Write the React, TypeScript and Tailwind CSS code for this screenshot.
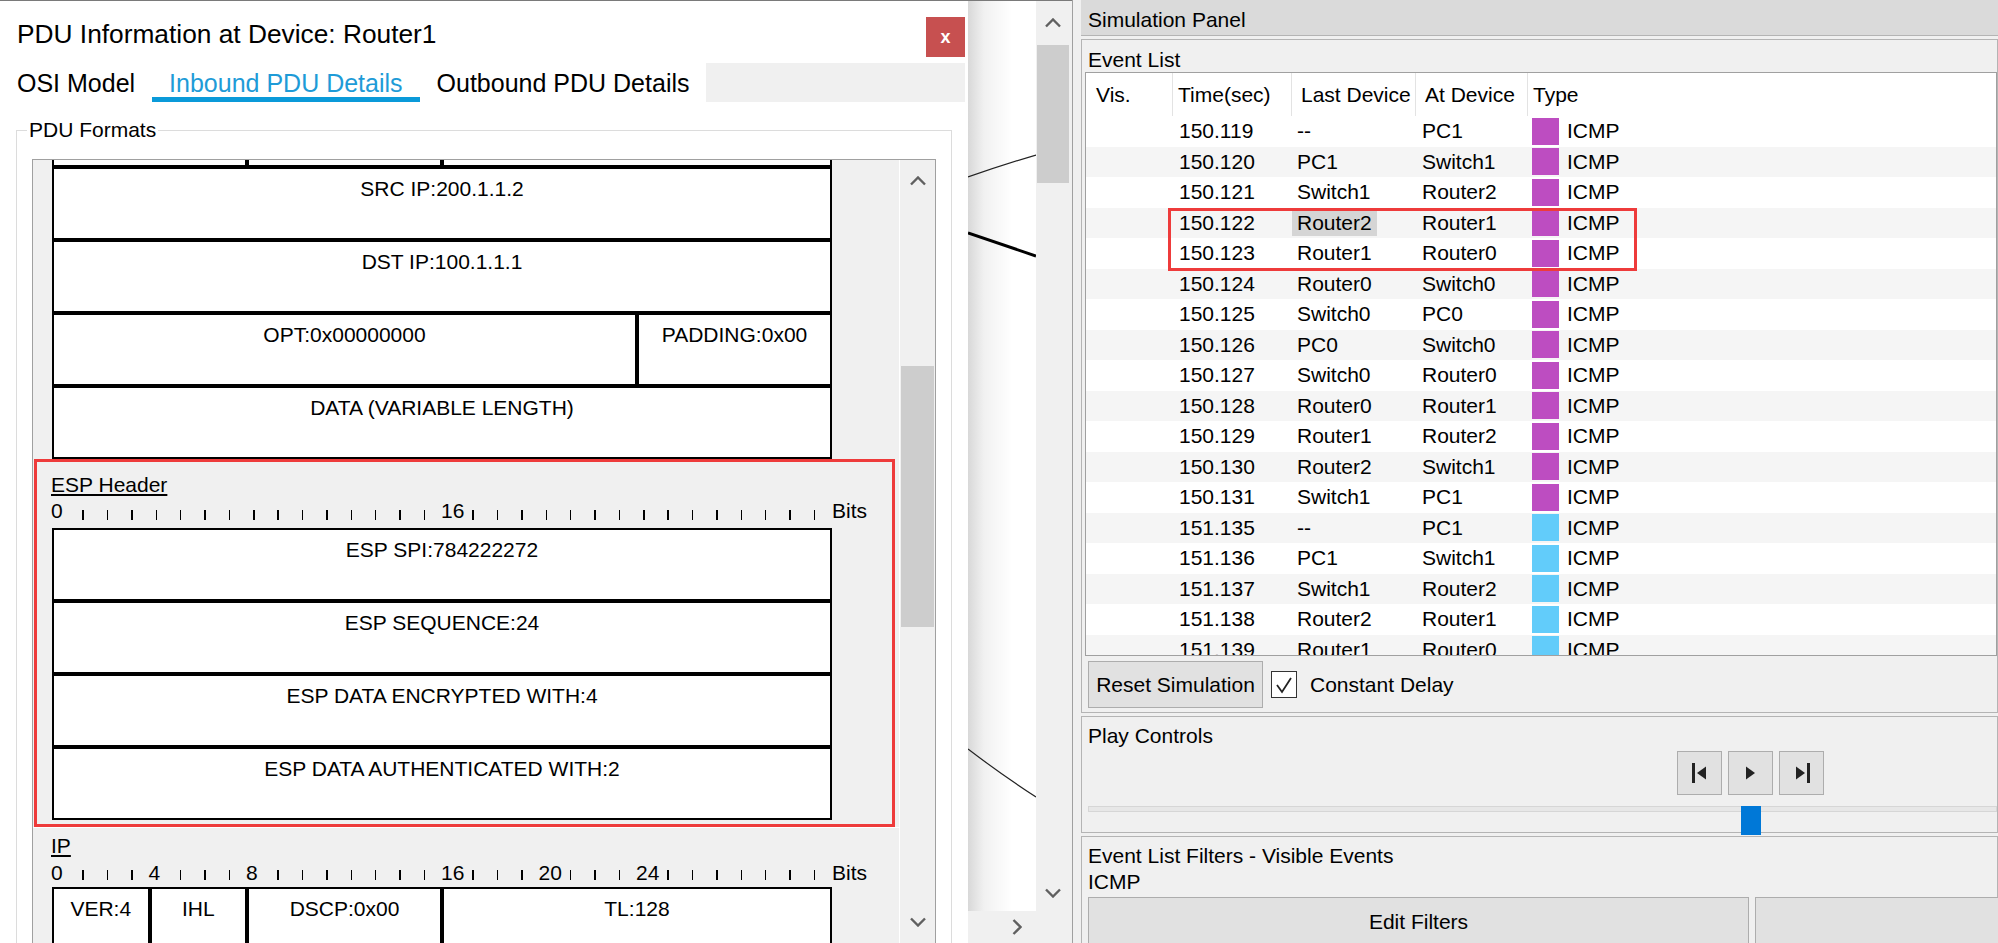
import React from "react";

type Ev = [string, string, string, "p" | "b"];

const EVENTS: Ev[] = [
  ["150.119", "--", "PC1", "p"],
  ["150.120", "PC1", "Switch1", "p"],
  ["150.121", "Switch1", "Router2", "p"],
  ["150.122", "Router2", "Router1", "p"],
  ["150.123", "Router1", "Router0", "p"],
  ["150.124", "Router0", "Switch0", "p"],
  ["150.125", "Switch0", "PC0", "p"],
  ["150.126", "PC0", "Switch0", "p"],
  ["150.127", "Switch0", "Router0", "p"],
  ["150.128", "Router0", "Router1", "p"],
  ["150.129", "Router1", "Router2", "p"],
  ["150.130", "Router2", "Switch1", "p"],
  ["150.131", "Switch1", "PC1", "p"],
  ["151.135", "--", "PC1", "b"],
  ["151.136", "PC1", "Switch1", "b"],
  ["151.137", "Switch1", "Router2", "b"],
  ["151.138", "Router2", "Router1", "b"],
  ["151.139", "Router1", "Router0", "b"],
];

function Chevron({ dir }: { dir: "up" | "down" | "right" }) {
  if (dir === "right") {
    return (
      <svg width="10" height="16" viewBox="0 0 10 16">
        <polyline points="1.5,1 8.5,8 1.5,15" fill="none" stroke="#606060" strokeWidth="2.4" />
      </svg>
    );
  }
  return (
    <svg width="16" height="10" viewBox="0 0 16 10">
      <polyline
        points={dir === "up" ? "1,8.5 8,1.5 15,8.5" : "1,1.5 8,8.5 15,1.5"}
        fill="none"
        stroke="#606060"
        strokeWidth="2.4"
      />
    </svg>
  );
}

function Ruler({ labels, h, tick }: { labels: Record<number, string>; h: string; tick: string }) {
  return (
    <div className={`flex shrink-0 pl-[18px] ${h}`}>
      {Array.from({ length: 32 }, (_, i) => (
        <div key={i} className="w-[24.375px] shrink-0 whitespace-nowrap">
          {labels[i] ? (
            <span className="block text-[21px] leading-[24px]">{labels[i]}</span>
          ) : (
            <span className={`ml-[7px] block h-[10px] w-[1.5px] bg-black ${tick}`} />
          )}
        </div>
      ))}
      <span className="ml-px text-[21px] leading-[24px]">Bits</span>
    </div>
  );
}

function Cell({ w, children }: { w: string; children?: React.ReactNode }) {
  return (
    <div className={`${w} h-full shrink-0 border-2 border-black bg-white pt-[8px] text-center text-[21px] leading-[24px] whitespace-nowrap`}>
      {children}
    </div>
  );
}

function Row({ children }: { children: React.ReactNode }) {
  return <div className="ml-[19px] flex h-[73px] w-[780px] shrink-0">{children}</div>;
}

function Dialog() {
  return (
    <div className="flex h-full w-[968px] shrink-0 flex-col overflow-hidden border-t border-[#7a7a7a] bg-white">
      <div className="flex h-[62px] shrink-0 items-start justify-between pr-[3px]">
        <h1 className="pl-[17px] pt-[18px] text-[26.3px] leading-[30px]">PDU Information at Device: Router1</h1>
        <button
          type="button"
          className="mt-[16px] flex h-[40px] w-[39px] items-center justify-center bg-[#c75050] text-[18px] font-bold text-white"
        >
          x
        </button>
      </div>

      <div className="flex h-[39px] shrink-0 pr-[3px] text-[25px] leading-[26px]">
        <div className="border-b-[5px] border-transparent px-[17px] pt-[7px]">OSI Model</div>
        <div className="border-b-[5px] border-[#0a9ad9] px-[17px] pt-[7px] text-[#1e9bd7]">Inbound PDU Details</div>
        <div className="border-b-[5px] border-transparent px-[17px] pt-[7px]">Outbound PDU Details</div>
        <div className="flex-1 bg-[#f0f0f0]" />
      </div>

      <fieldset className="mx-[16px] mt-[16px] border border-[#dcdcdc]">
        <legend className="ml-[10px] px-[2px] text-[21px] leading-[24px]">PDU Formats</legend>
        <div className="mx-[15px] mt-[17px] flex h-[790px] border border-[#a0a0a0]">
          <div className="flex min-w-0 flex-1 flex-col overflow-hidden bg-[#f0f0f0]">
            <div className="ml-[19px] flex h-[7px] w-[780px] shrink-0">
              <div className="w-[195px] border-x-2 border-b-2 border-black bg-white" />
              <div className="w-[195px] border-x-2 border-b-2 border-black bg-white" />
              <div className="w-[390px] border-x-2 border-b-2 border-black bg-white" />
            </div>
            <Row>
              <Cell w="w-[780px]">SRC IP:200.1.1.2</Cell>
            </Row>
            <Row>
              <Cell w="w-[780px]">DST IP:100.1.1.1</Cell>
            </Row>
            <Row>
              <Cell w="w-[585px]">OPT:0x00000000</Cell>
              <Cell w="w-[195px]">PADDING:0x00</Cell>
            </Row>
            <Row>
              <Cell w="w-[780px]">DATA (VARIABLE LENGTH)</Cell>
            </Row>

            <div className="relative flex shrink-0 flex-col pb-[7px] pt-[14px]">
              <div className="pl-[18px] text-[21px] leading-[24px] underline">ESP Header</div>
              <div className="mt-[2px]">
                <Ruler labels={{ 0: "0", 16: "16" }} h="h-[29px]" tick="mt-[11px]" />
              </div>
              <Row>
                <Cell w="w-[780px]">ESP SPI:784222272</Cell>
              </Row>
              <Row>
                <Cell w="w-[780px]">ESP SEQUENCE:24</Cell>
              </Row>
              <Row>
                <Cell w="w-[780px]">ESP DATA ENCRYPTED WITH:4</Cell>
              </Row>
              <Row>
                <Cell w="w-[780px]">ESP DATA AUTHENTICATED WITH:2</Cell>
              </Row>
              <div className="pointer-events-none absolute bottom-0 left-[1px] right-[4px] top-0 border-[3px] border-[#ee3b3b]" />
            </div>

            <div className="flex shrink-0 flex-col border-t border-white pt-[6px]">
              <div className="pl-[18px] text-[21px] leading-[24px] underline">IP</div>
              <div className="mt-[3px]">
                <Ruler labels={{ 0: "0", 4: "4", 8: "8", 16: "16", 20: "20", 24: "24" }} h="h-[26px]" tick="mt-[9px]" />
              </div>
              <Row>
                <Cell w="w-[97.5px]">VER:4</Cell>
                <Cell w="w-[97.5px]">IHL</Cell>
                <Cell w="w-[195px]">DSCP:0x00</Cell>
                <Cell w="w-[390px]">TL:128</Cell>
              </Row>
            </div>
          </div>

          <div className="flex w-[36px] shrink-0 flex-col border-l border-white bg-[#f0f0f0]">
            <div className="flex h-[42px] items-center justify-center">
              <Chevron dir="up" />
            </div>
            <div className="h-[164px]" />
            <div className="ml-px h-[261px] w-[33px] bg-[#cdcdcd]" />
            <div className="h-[285px]" />
            <div className="flex h-[20px] items-center justify-center">
              <Chevron dir="down" />
            </div>
          </div>
        </div>
      </fieldset>
    </div>
  );
}

function Canvas() {
  return (
    <div className="flex h-full w-[104px] shrink-0 flex-col border-t border-[#7a7a7a] bg-[#f0f0f0]">
      <div className="flex h-[910px] shrink-0">
        <div className="w-[68px] shrink-0 bg-[linear-gradient(to_right,#d8d8d8,#f1f1f1_16px,#ffffff_44px)]">
          <svg width="68" height="910" viewBox="0 0 68 910">
            <path d="M0 176 Q34 164 68 154" fill="none" stroke="#222" strokeWidth="1.2" />
            <path d="M0 232 L68 255" fill="none" stroke="#000" strokeWidth="3" />
            <path d="M0 748 Q34 774 68 796" fill="none" stroke="#222" strokeWidth="1.2" />
          </svg>
        </div>
        <div className="flex w-[34px] shrink-0 flex-col">
          <div className="flex h-[44px] items-center justify-center">
            <Chevron dir="up" />
          </div>
          <div className="ml-px h-[138px] w-[32px] bg-[#cdcdcd]" />
          <div className="flex-1" />
          <div className="flex h-[36px] items-center justify-center">
            <Chevron dir="down" />
          </div>
        </div>
      </div>
      <div className="flex h-[32px] w-[68px] items-center justify-end pr-[14px]">
        <Chevron dir="right" />
      </div>
    </div>
  );
}

function PlayIcon({ kind }: { kind: "back" | "play" | "fwd" }) {
  return (
    <svg width="20" height="20" viewBox="0 0 20 20" fill="#222">
      {kind === "back" && (
        <>
          <rect x="2" y="0" width="3" height="20" />
          <polygon points="16,3.5 7,10 16,16.5" />
        </>
      )}
      {kind === "play" && <polygon points="5,3.5 14,10 5,16.5" />}
      {kind === "fwd" && (
        <>
          <polygon points="4,3.5 13,10 4,16.5" />
          <rect x="15" y="0" width="3" height="20" />
        </>
      )}
    </svg>
  );
}

function SimulationPanel() {
  return (
    <div className="flex h-full min-w-0 flex-1 flex-col overflow-hidden border-l border-[#a0a0a0] bg-[#f0f0f0] pl-[8px] text-[21px] leading-[24px]">
      <div className="h-[36px] shrink-0 border-b border-[#b4b4b4] bg-[#dadada] pl-[7px] pt-[8px]">Simulation Panel</div>

      <div className="mt-[3px] flex h-[674px] shrink-0 flex-col border border-[#b4b4b4]">
        <div className="h-[32px] shrink-0 pl-[6px] pt-[8px]">Event List</div>
        <div className="relative ml-[3px] h-[584px] shrink-0 overflow-hidden border border-[#a0a0a0] bg-white">
          <div className="flex h-[43px] items-stretch">
            <div className="flex w-[87px] shrink-0 items-center border-r border-[#e3e3e3] pl-[10px]">Vis.</div>
            <div className="flex w-[119px] shrink-0 items-center border-r border-[#e3e3e3] pl-[5px]">Time(sec)</div>
            <div className="flex w-[124px] shrink-0 items-center overflow-hidden whitespace-nowrap border-r border-[#e3e3e3] pl-[9px]">
              Last Device
            </div>
            <div className="flex w-[112px] shrink-0 items-center border-r border-[#e3e3e3] pl-[9px]">At Device</div>
            <div className="flex flex-1 items-center pl-[5px]">Type</div>
          </div>
          {EVENTS.map(([t, last, at, c], i) => (
            <div key={t} className={`flex h-[30.5px] items-center ${i % 2 ? "bg-[#f5f5f5]" : "bg-white"}`}>
              <div className="w-[87px] shrink-0" />
              <div className="w-[119px] shrink-0 pl-[6px]">{t}</div>
              <div className="w-[124px] shrink-0">
                <span className={`inline-block px-[5px] leading-[26px] ${i === 3 ? "bg-[#d5d5d5]" : ""}`}>{last}</span>
              </div>
              <div className="w-[112px] shrink-0 pl-[6px]">{at}</div>
              <div className="flex items-center">
                <span className={`ml-[4px] h-[27px] w-[27px] ${c === "p" ? "bg-[#bd4dc1]" : "bg-[#62ccfa]"}`} />
                <span className="ml-[8px]">ICMP</span>
              </div>
            </div>
          ))}
          <div className="pointer-events-none absolute left-[82px] top-[135px] h-[63px] w-[469px] border-[3px] border-[#ee3b3b]" />
        </div>
        <div className="ml-[6px] mt-[5px] flex items-center">
          <button type="button" className="h-[47px] w-[175px] border border-[#adadad] bg-[#e1e1e1]">
            Reset Simulation
          </button>
          <span className="ml-[8px] flex h-[27px] w-[26px] items-center justify-center border border-[#333] bg-white">
            <svg width="20" height="20" viewBox="0 0 20 20">
              <polyline points="3,10 8,17 17,3" fill="none" stroke="#222" strokeWidth="1.8" />
            </svg>
          </span>
          <span className="ml-[13px]">Constant Delay</span>
        </div>
      </div>

      <div className="mt-[3px] h-[117px] shrink-0 border border-[#b4b4b4]">
        <div className="pl-[6px] pt-[7px]">Play Controls</div>
        <div className="ml-[595px] mt-[3px] flex gap-[6px]">
          {(["back", "play", "fwd"] as const).map((k) => (
            <button
              key={k}
              type="button"
              className="flex h-[44px] w-[45px] items-center justify-center border border-[#adadad] bg-[#e1e1e1]"
            >
              <PlayIcon kind={k} />
            </button>
          ))}
        </div>
        <div className="relative mt-[4px] h-[30px]">
          <div className="ml-[6px] mt-[11px] h-[6px] border border-[#d6d6d6] bg-[#e7e7e7]" />
          <div className="absolute left-[659px] top-0 h-[29px] w-[20px] bg-[#0078d7]" />
        </div>
      </div>

      <div className="mt-[3px] flex-1 border border-b-0 border-[#b4b4b4]">
        <div className="pl-[6px] pt-[6px] leading-[26px]">Event List Filters - Visible Events</div>
        <div className="pl-[6px] leading-[26px]">ICMP</div>
        <div className="ml-[6px] mt-[2px] flex gap-[6px]">
          <button type="button" className="h-[50px] w-[661px] shrink-0 border border-[#adadad] bg-[#e1e1e1]">
            Edit Filters
          </button>
          <button type="button" className="h-[50px] w-[661px] shrink-0 border border-[#adadad] bg-[#e1e1e1]" />
        </div>
      </div>
    </div>
  );
}

export default function App() {
  return (
    <div className="flex h-[943px] w-[1998px] overflow-hidden bg-white font-['Liberation_Sans',Arial,sans-serif] text-black">
      <Dialog />
      <Canvas />
      <SimulationPanel />
    </div>
  );
}
